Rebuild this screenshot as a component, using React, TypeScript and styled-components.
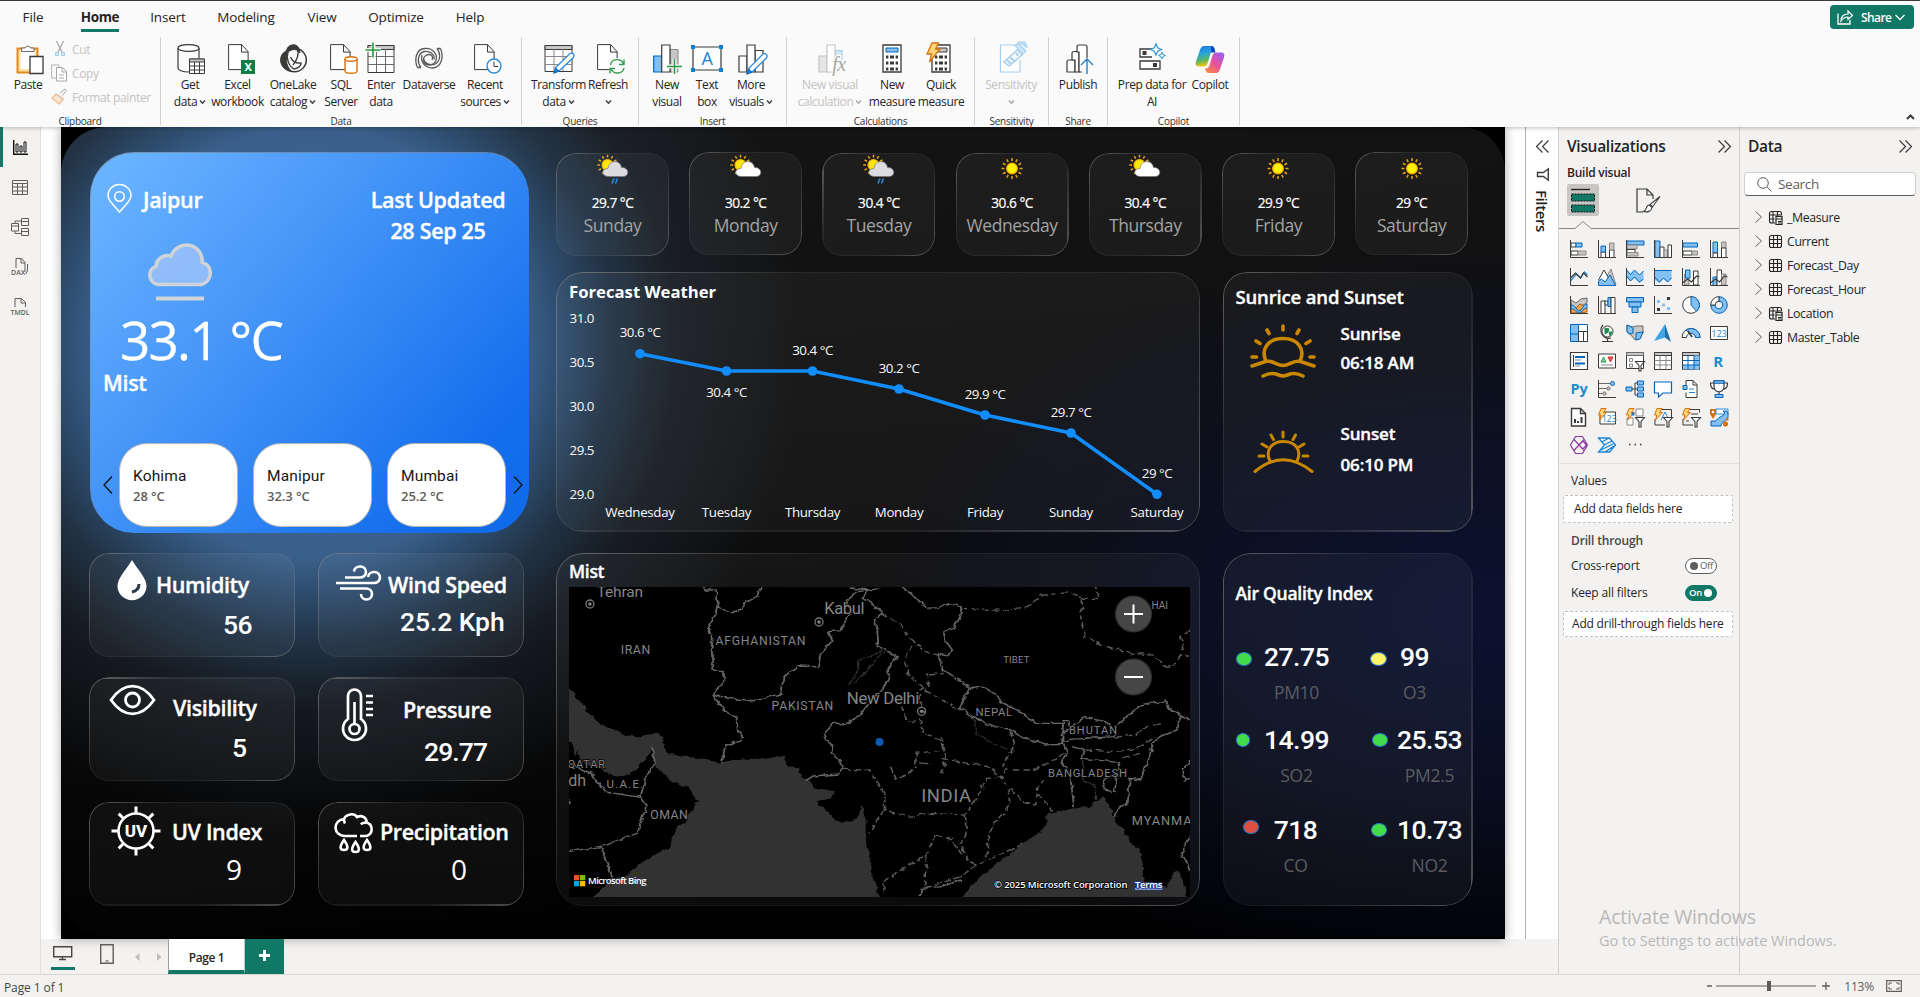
import React from 'react';
import styled, { createGlobalStyle, css } from 'styled-components';

const UI = '"Open Sans", "Noto Sans", sans-serif';
const DIN = 'Roboto, "Liberation Sans", sans-serif';
const K = '#3b3a39';
const B = '#84bff2';
const D = '#0364b8';
const G = '#c8c6c4';
const O = '#d8700d';
const GREEN = '#117865';

const Global = createGlobalStyle`
  *, *::before, *::after { box-sizing: border-box; }
  html, body { margin: 0; padding: 0; }
  body { font-family: ${UI}; font-stretch: 90%; color: #252423; background: #f3f2f1; overflow: hidden; }
  svg { display: block; flex: none; overflow: visible; }
`;

/* ---------- vector helpers ---------- */
type Shape = [d: string, stroke?: string, fill?: string, width?: number];
const r = (x: number, y: number, w: number, h: number) => `M${x} ${y}h${w}v${h}h${-w}z`;
const c = (x: number, y: number, q: number) => `M${x - q} ${y}a${q} ${q} 0 1 0 ${2 * q} 0a${q} ${q} 0 1 0 ${-2 * q} 0z`;

function Glyph({ w, h, box, shapes, children }: { w: number; h: number; box?: string; shapes?: Shape[]; children?: React.ReactNode }) {
  return (
    <svg width={w} height={h} viewBox={box ?? `0 0 ${w} ${h}`}>
      {shapes?.map(([d, stroke = K, fill = 'none', width = 1], i) => (
        <path key={i} d={d} stroke={stroke} fill={fill} strokeWidth={width} />
      ))}
      {children}
    </svg>
  );
}

/* ---------- shell ---------- */
const Shell = styled.div`
  width: 1920px; height: 997px; display: flex; flex-direction: column; position: relative;
  border-top: 1px solid #3b3a39; background: #f3f2f1; overflow: hidden;
`;
const Ribbon = styled.header`
  height: 126px; flex: none; background: #fafafa; position: relative; z-index: 2;
  box-shadow: 0 1px 4px rgba(0,0,0,.25); display: flex; flex-direction: column;
`;
const TabsRow = styled.nav`height: 36px; display: flex; padding-left: 13px;`;
const TabItem = styled.div<{ $w: number; $on?: boolean }>`
  width: ${p => p.$w}px; display: flex; justify-content: center; font-size: 13.5px; letter-spacing: -.15px;
  span { line-height: 20px; padding-top: 6px; height: 31px; white-space: nowrap;
    ${p => p.$on && css`font-weight: 700; letter-spacing: -.4px; border-bottom: 3px solid ${GREEN};`} }
`;
const ShareButton = styled.div`
  margin-left: auto; margin-right: 6px; margin-top: 4px; width: 84px; height: 24px; border-radius: 4px;
  background: ${GREEN}; color: #fff; font-size: 12px; display: flex; align-items: center; padding-left: 7px; gap: 8px;
  span { letter-spacing: -.6px; font-weight: 600; width: 29px; }
  svg:last-child { margin-left: -3px; }
`;
const Groups = styled.div`display: flex; height: 90px;`;
const Group = styled.section<{ $w: number; $pad?: number }>`
  width: ${p => p.$w}px; height: 88px; border-right: 1px solid #d2d0ce; display: flex; flex-direction: column;
  padding-left: ${p => p.$pad ?? 4}px;
`;
const GroupItems = styled.div`display: flex; height: 78px;`;
const GroupName = styled.div<{ $shift?: number }>`
  font-size: 10px; line-height: 12px; text-align: center; letter-spacing: -.25px; margin-left: -${p => p.$shift ?? 4}px; color: #323130;
  height: 10px;
`;
const Tool = styled.div<{ $w: number; $off?: boolean }>`
  width: ${p => p.$w}px; flex: none; display: flex; flex-direction: column; align-items: center; padding-top: 7px;
  font-size: 12px; line-height: 16px; letter-spacing: -.4px; color: ${p => (p.$off ? '#c4c2c0' : '#252423')};
`;
const ToolIcon = styled.div<{ $dx?: number }>`height: 30px; transform: translateX(${p => p.$dx ?? 0}px);`;
const ToolLabel = styled.div`
  margin-top: 3px; display: flex; flex-direction: column; align-items: center; white-space: nowrap;
  span { display: flex; align-items: center; gap: 2px; min-height: 16.500px; line-height: 16.500px; }
`;
const SmallTools = styled.div`display: flex; flex-direction: column; padding-top: 0; margin-left: 4px; width: 104px;`;
const SmallTool = styled.div`
  height: 24px; display: flex; align-items: center; gap: 5px; font-size: 12px; color: #c4c2c0; letter-spacing: -.35px; white-space: nowrap;
`;
const CollapseMark = styled.div`margin-left: auto; padding: 77px 5px 0 0;`;

function Caret({ color = K }: { color?: string }) {
  return <Glyph w={7} h={6} shapes={[['M1 1.500L3.500 4.200L6 1.500', color, 'none', 1.3]]} />;
}

const doc: Shape = ['M.6 .6h13l6.500 7v18h-19.500zM13.500 .6v7.500h6.500', K, '#fff'];
const toolIcons: Record<string, React.ReactNode> = {
  paste: <Glyph w={28} h={30} shapes={[
    ['M1.500 4.500h20v24h-20z', '#e08a1e', '#fce0a2', 2], ['M4.500 7h14v18h-14z', 'none', '#fff'],
    ['M5.500 7.500v-3.500h3.500a3 3 0 0 1 5.500 0h3.500v3.500z', '#6b6967', '#fff'], ['M14 12.500h13v17h-13z', K, '#fff', 1.3]]} />,
  get: <Glyph w={28} h={30} shapes={[
    ['M1 4v20c0 2 4 4 11 4M22 4v10', K, 'none', 1.2], ['M1 4c0-4.500 21-4.500 21 0s-21 4.500-21 0z', K, '#fff', 1.2],
    [r(12.5, 15, 15, 14.5), K, '#fff'], [r(12.5, 15, 15, 3), K, G], ['M17.500 18v11.500M22.500 18v11.500M12.500 22h15M12.500 26h15']]} />,
  excel: <Glyph w={28} h={30} shapes={[doc, [r(13, 16, 14, 14), 'none', '#107c41']]}>
    <text x="20" y="27" fontSize="11" fontWeight="700" fill="#fff" textAnchor="middle">X</text></Glyph>,
  lake: <Glyph w={28} h={30} shapes={[
    ['M14 .8c-5 0-7 3-7.500 6C2 9 0 13 .8 18c1 5 5 9 11 9.500-5-4-7-12-4-19C12 4 18 5 20 9c-.5-5-2.500-8-6-8.200z', K, K],
    [c(14.5, 16, 11.8), K, 'none', 1.5], ['M8 8c-2 6 .5 14 6 17 5-1 7-3 7-6-5 .5-9-2-10.500-6M13 21c4-5 6-11 4.500-16', K, 'none', 1.4]]} />,
  sql: <Glyph w={28} h={30} shapes={[doc, ['M15 15v12c0 3 12 3 12 0v-12', O, '#fff', 1.4], ['M15 15c0-3 12-3 12 0s-12 3-12 0z', O, '#fff', 1.4]]} />,
  enter: <Glyph w={28} h={30} shapes={[
    [r(1, 1.5, 26, 27), K, '#fff'], [r(1, 1.5, 26, 4), K, G], ['M1 12.500h26M1 20.500h26M9.500 5v23M18.500 5v23', '#6b6967'],
    ['M-1 6h15M6.500 -1.500v15', '#fafafa', 'none', 4], ['M-1.500 6h15M6 -1.500v15', '#239b44', 'none', 1.6]]} />,
  data: <Glyph w={28} h={30} shapes={[
    ['M2.500 23.500C-.5 17 0 5 10 4.500c8-.5 13 6 11 12-2 5-9 6-12 2-2-4 1-8 5-8 3 0 4.500 3 3 5.500', '#5a5856', 'none', 1.3],
    ['M25.500 4.500c3 7 2 19-8 19.500-7.500 0-12.500-6-10.500-13', '#5a5856', 'none', 1.3],
    ['M6 23.500C1.500 18 3 9 9 7.500c6-1 11 3 10 8', '#5a5856', 'none', 1.3],
    ['M22 4.500c4.500 6 3 14-3 16-6 1-10-2-10.500-6M2.500 23.500h3.500M22 4.500h3.500', '#5a5856', 'none', 1.3]]} />,
  recent: <Glyph w={28} h={30} shapes={[doc, [c(20, 22, 7), '#2b88d8', '#fff', 1.4], ['M20 17.500v5h4', K]]} />,
  transform: <Glyph w={30} h={30} shapes={[
    [r(1, 1.5, 27, 26), K, '#fff'], [r(1, 1.5, 27, 4), K, G], ['M1 12.500h27M1 20.500h27M10 5v22M19 5v22', '#8a8886'],
    ['M10 29l2-6L26 9.500c3-1 5 1 3.500 4L15 27z', '#2b88d8', '#fff', 1.3], ['M10 29l1.500-5 3.500 3z', D, '#2b88d8']]} />,
  refresh: <Glyph w={28} h={30} shapes={[doc, [r(12, 14, 16, 16), 'none', '#fafafa'],
    ['M13.500 21c1-7 11-7 13-1M27 15.500v5h-5M27 24c-1 6-10 7-13 1M13 29.500v-5h5', '#2f9e4f', 'none', 1.4]]} />,
  visual: <Glyph w={28} h={30} shapes={[
    [r(0.7, 12, 8, 16), D, B, 1.2], [r(17, 5.5, 8, 22.5), '#8a8886', G], [r(8.7, 1, 8.3, 27), K, '#fff', 1.2],
    ['M14 22.500h15M21.500 15v15', '#fafafa', 'none', 4], ['M14 22.500h15M21.500 15v15', '#239b44', 'none', 1.5]]} />,
  text: <Glyph w={32} h={30} shapes={[[r(2, 3, 28, 23), K, '#fff', 1.2], [r(0, 1, 4, 4), 'none', '#0f7fd0'], [r(28, 1, 4, 4), 'none', '#0f7fd0'], [r(0, 24, 4, 4), 'none', '#0f7fd0'], [r(28, 24, 4, 4), 'none', '#0f7fd0']]}>
    <text x="16" y="21" fontSize="18" fill="#1784d0" textAnchor="middle">A</text></Glyph>,
  more: <Glyph w={30} h={30} shapes={[
    [r(1, 12, 8, 16), K, '#fff', 1.2], [r(17, 6.5, 8, 21.5), K, '#fff', 1.2], [r(9, 1, 8, 27), K, '#fff', 1.2],
    ['M9 30l2-6L25 10c3-1 5 1 3.500 4L14 28z', '#2b88d8', '#fff', 1.3], ['M9 30l1.500-5 3.500 3z', D, '#2b88d8']]} />,
  fx: <Glyph w={28} h={30} shapes={[
    [r(1, 12, 8, 16), '#c8c6c4', '#e6e5e3', 1.2], [r(17, 6.5, 7, 12), '#a9cdea', '#d3e6f6', 1.2], [r(9, 1, 8, 27), '#c8c6c4', '#fff', 1.2]]}>
    <text x="21" y="27" fontFamily="Liberation Serif" fontStyle="italic" fontSize="20" fill="#a8a6a4" stroke="#fafafa" strokeWidth="3" paintOrder="stroke" textAnchor="middle">fx</text></Glyph>,
  calc: <Glyph w={20} h={30} shapes={[
    [r(1, 1, 18, 27), K, '#fff', 1.3], [r(4, 4, 12, 4), D, B, 1], ['M4 13h12M4 19h12M4 25h12', K, 'none', 3]]}>
    <path d="M7.200 11v16M12.800 11v16" stroke="#fff" strokeWidth="1.600" /></Glyph>,
  quick: <Glyph w={26} h={30} shapes={[
    [r(6, 1, 18, 27), K, '#fff', 1.3], [r(11, 4, 10, 4), K, G], ['M9 13h12M9 19h12M9 25h12', K, 'none', 3], ['M12.200 11v16M17.800 11v16', '#fff', 'none', 1.6],
    ['M6-1h6.500l-3 6h4.500L3.500 18l2-8H1z', O, '#fcd679', 1.3]]} />,
  sens: <Glyph w={28} h={30} shapes={[
    ['M21 16v12h-19.500v-27h16', '#a6d0ee', '#fff', 1.2], ['M5 18l13-12 5 5-13 11z', '#a6d0ee', '#fafafa', 1.6], ['M8 16l4 4M11 13l4 4M17 9l2 3', '#a6d0ee', 'none', 2],
    ['M16 2l3-3 8 8-3 3zM20-2l6 0 2 5z', '#a6d0ee', '#cde6f7', 1.2]]} />,
  publish: <Glyph w={28} h={30} shapes={[
    ['M1 28v-10q0-2 2-2h6v12z', K, '#fff', 1.2], ['M6 16v-7q0-1.500 2-1.500h5v20.500h-4v-12z', K, '#fff', 1.2], ['M11 8v-5q0-2 2-2h6q2 0 2 2v25h-8v-20z', K, '#fff', 1.2],
    [r(16, 14, 12, 16), 'none', '#fafafa'], ['M21 30v-15M15 21l6-6 6 6', '#1f7fc9', 'none', 1.4]]} />,
  prep: <Glyph w={26} h={30} shapes={[
    [r(1, 5, 20, 8), K, '#fff', 1.3], [r(3.5, 7, 4, 4), 'none', K], [r(1, 17, 20, 8), K, '#fff', 1.3], [r(14, 19, 4, 4), 'none', K], [r(13, 0, 14, 15.5), 'none', '#fafafa'],
    ['M17 0l1.700 3.800 3.800 1.700-3.800 1.700-1.700 3.800-1.700-3.800-3.800-1.700 3.800-1.700z', '#2b96d8', '#fff', 1.2], ['M23 8l1 2.500 2.500 1-2.500 1-1 2.500-1-2.500-2.500-1 2.500-1z', '#2b96d8', '#fff']]} />,
  copilot: (
    <svg width="30" height="30" viewBox="0 -1.500 30 30">
      <defs>
        <linearGradient id="cpA" x1="0" y1="0" x2="0.2" y2="1"><stop offset="0" stopColor="#1672e8" /><stop offset=".45" stopColor="#2aa6d8" /><stop offset=".75" stopColor="#5cb85a" /><stop offset="1" stopColor="#f2c40f" /></linearGradient>
        <linearGradient id="cpB" x1=".8" y1="0" x2="0.1" y2="1"><stop offset="0" stopColor="#a45cf0" /><stop offset=".5" stopColor="#e8509a" /><stop offset="1" stopColor="#f98b3c" /></linearGradient>
      </defs>
      <path d="M20 5l-.8-2.500Q18.500.5 16 .5H9Q6.500.5 5.500 3L1 16q-1.500 5 3 5h5q2.500 0 3.500-3l3-10q.8-3 4.500-3z" fill="url(#cpA)" />
      <path d="M10 23l.8 2.500Q11.500 27.500 14 27.500h7q2.500 0 3.500-2.500L29 12q1.500-5-3-5h-5q-2.500 0-3.500 3l-3 10q-.8 3-4.500 3z" fill="url(#cpB)" />
      <path d="M16 .5Q18.500.5 19.200 2.500L20.500 7h-5l.8-2z" fill="#0a45c0" />
    </svg>
  ),
};

type ToolDef = { icon: string; w: number; lines: string[]; caret?: boolean; off?: boolean; dx?: number };
type GroupDef = { name: string; w: number; pad: number; tools: ToolDef[] };
const groups: GroupDef[] = [
  { name: 'Data', w: 361, pad: 4, tools: [
    { icon: 'get', w: 50, lines: ['Get', 'data'], caret: true, dx: 1 }, { icon: 'excel', w: 45, lines: ['Excel', 'workbook'], dx: 4 },
    { icon: 'lake', w: 66, lines: ['OneLake', 'catalog'], caret: true, dx: 1 }, { icon: 'sql', w: 30, lines: ['SQL', 'Server'], dx: 3 },
    { icon: 'enter', w: 50, lines: ['Enter', 'data'] }, { icon: 'data', w: 46, lines: ['Dataverse'] },
    { icon: 'recent', w: 66, lines: ['Recent', 'sources'], caret: true, dx: 3 }] },
  { name: 'Queries', w: 117, pad: 2, tools: [
    { icon: 'transform', w: 69, lines: ['Transform', 'data'], caret: true }, { icon: 'refresh', w: 30, lines: ['Refresh', ''], caret: true, dx: 3 }] },
  { name: 'Insert', w: 148, pad: 2, tools: [
    { icon: 'visual', w: 52, lines: ['New', 'visual'] }, { icon: 'text', w: 28, lines: ['Text', 'box'] }, { icon: 'more', w: 60, lines: ['More', 'visuals'], caret: true, dx: 2 }] },
  { name: 'Calculations', w: 188, pad: 5, tools: [
    { icon: 'fx', w: 76, lines: ['New visual', 'calculation'], caret: true, off: true, dx: 2 }, { icon: 'calc', w: 48, lines: ['New', 'measure'] }, { icon: 'quick', w: 50, lines: ['Quick', 'measure'], dx: -2 }] },
  { name: 'Sensitivity', w: 74, pad: 2, tools: [{ icon: 'sens', w: 68, lines: ['Sensitivity', ''], caret: true, off: true, dx: 2 }] },
  { name: 'Share', w: 59, pad: 2, tools: [{ icon: 'publish', w: 54, lines: ['Publish'], dx: 2 }] },
  { name: 'Copilot', w: 132, pad: 2, tools: [{ icon: 'prep', w: 84, lines: ['Prep data for', 'AI'] }, { icon: 'copilot', w: 32, lines: ['Copilot'] }] },
];

function ToolButton({ t }: { t: ToolDef }) {
  return (
    <Tool $w={t.w} $off={t.off}>
      <ToolIcon $dx={t.dx}>{toolIcons[t.icon]}</ToolIcon>
      <ToolLabel>
        {t.lines.map((l, i) => (
          <span key={i}>{l}{t.caret && i === t.lines.length - 1 && <Caret color={t.off ? '#a8a6a4' : K} />}</span>
        ))}
      </ToolLabel>
    </Tool>
  );
}

function RibbonBar() {
  return (
    <Ribbon>
      <TabsRow>
        <TabItem $w={40}><span>File</span></TabItem>
        <TabItem $w={94} $on><span>Home</span></TabItem>
        <TabItem $w={42}><span>Insert</span></TabItem>
        <TabItem $w={114}><span>Modeling</span></TabItem>
        <TabItem $w={38}><span>View</span></TabItem>
        <TabItem $w={110}><span>Optimize</span></TabItem>
        <TabItem $w={38}><span>Help</span></TabItem>
        <ShareButton>
          <Glyph w={16} h={15} shapes={[['M1 3.500v10.500h12v-4', '#fff', 'none', 1.3], ['M4 11c0-4 2-7 7-7V1l4.500 4.500L11 9.500V7C8 7 6 8 4 11z', '#fff', 'none', 1.2]]} />
          <span>Share</span>
          <Glyph w={10} h={7} shapes={[['M.5 1l4.500 4.500L9.500 1', '#fff', 'none', 1.3]]} />
        </ShareButton>
      </TabsRow>
      <Groups>
        <Group $w={161} $pad={13}>
          <GroupItems>
            <Tool $w={30}><ToolIcon $dx={2}>{toolIcons.paste}</ToolIcon><ToolLabel><span>Paste</span></ToolLabel></Tool>
            <SmallTools>
              <SmallTool><Glyph w={20} h={18} box="-8 0 20 18" shapes={[['M1.500 1l6 12M8.500 1l-6 12', '#a8a6a4', 'none', 1.2], [r(0.5, 12.5, 3, 3), '#9fcdea', '#d5eaf7'], [r(6.5, 12.5, 3, 3), '#9fcdea', '#d5eaf7']]} />Cut</SmallTool>
              <SmallTool><Glyph w={20} h={18} box="-4 0 20 18" shapes={[['M8 3.500V1H.6v13h5', '#b5b3b1'], ['M5.500 3.500h6l4 4v9.500h-10zM11 3.500v4.500h4.500M8 11h5M8 14h5', '#a8a6a4', '#fff']]} />Copy</SmallTool>
              <SmallTool><Glyph w={20} h={18} box="-4 0 20 18" shapes={[['M9 5l5-4 1.500 1.500-4 5', '#a8a6a4'], ['M5 7l7 5', '#a8a6a4', 'none', 3], ['M5 6l-4 4 7 6 4-5z', '#f2bd94', '#fbe6d3', 1.3]]} />Format painter</SmallTool>
            </SmallTools>
          </GroupItems>
          <GroupName $shift={13}>Clipboard</GroupName>
        </Group>
        {groups.map(g => (
          <Group key={g.name} $w={g.w} $pad={g.pad}>
            <GroupItems>{g.tools.map((t, i) => <ToolButton key={i} t={t} />)}</GroupItems>
            <GroupName $shift={g.pad}>{g.name}</GroupName>
          </Group>
        ))}
        <CollapseMark><Glyph w={9} h={6} shapes={[['M1 5l3.500-3.500L8 5', K, 'none', 2]]} /></CollapseMark>
      </Groups>
    </Ribbon>
  );
}

/* ---------- body ---------- */
const Body = styled.div`display: flex; height: 847px; flex: none;`;
const Rail = styled.aside`width: 41px; flex: none; border-right: 1px solid #e1dfdd; display: flex; flex-direction: column;`;
const RailItem = styled.div<{ $on?: boolean }>`
  height: 40px; display: flex; align-items: center; justify-content: center; padding-right: ${p => (p.$on ? 3 : 0)}px;
  border-left: ${p => (p.$on ? `3px solid ${GREEN}` : '0')};
`;
const Center = styled.main`width: 1517px; flex: none; display: flex; flex-direction: column;`;
const Stage = styled.div`height: 812px; background: #fff; display: flex; padding-left: 20px;`;
const FiltersPane = styled.aside`
  margin-left: 20px; flex: 1; border-left: 1px solid #b3b0ad; display: flex; flex-direction: column; align-items: center; padding-top: 13px; gap: 15px;
  span { writing-mode: vertical-rl; font-size: 15px; font-weight: 600; letter-spacing: -.4px; line-height: 16px; margin-top: -6px; }
`;

const Canvas = styled.div`
  width: 1444px; height: 812px; background: #000; flex: none; box-shadow: 0 0 10px rgba(0,0,0,.35);
`;
const Backdrop = styled.div`
  width: 100%; height: 810px; border-radius: 46px 44px 0 46px; display: flex; gap: 27px; padding: 25px 0 0 29px;
  background:
    radial-gradient(circle 500px at 250px 216px, rgba(64,104,154,1) 0, rgba(58,95,138,1) 43%, rgba(48,82,118,.92) 50%, rgba(42,66,92,.7) 60%, rgba(36,48,62,.42) 73%, rgba(22,28,34,0) 98%),
    radial-gradient(ellipse 620px 380px at 1420px 490px, #0b1230 0, rgba(11,17,42,.8) 40%, rgba(8,10,24,0) 100%),
    linear-gradient(175deg, #151515 0, #0e0e0e 45%, #020202 88%, #000 100%);
`;
const edge = css`
  position: relative;
  &::before {
    content: ''; position: absolute; inset: 0; border-radius: inherit; padding: 1.3px; pointer-events: none;
    background: linear-gradient(125deg, rgba(150,145,140,.6) 0, rgba(140,135,130,.12) 30%, rgba(130,130,130,.12) 65%, rgba(150,150,145,.5) 100%);
    mask: linear-gradient(#000 0 0) content-box exclude, linear-gradient(#000 0 0);
  }
`;
const semibold = css`font-weight: 600; -webkit-text-stroke: .35px currentColor;`;
const LeftColumn = styled.div`width: 439px; flex: none; display: flex; flex-direction: column; gap: 20px;`;
const RightColumn = styled.div`width: 918px; flex: none; display: flex; flex-direction: column;`;

const Hero = styled.section`
  height: 381px; border-radius: 44px; color: #fff; padding-top: 32px; border: 1px solid; border-color: rgba(125,130,135,.6) transparent transparent rgba(125,130,135,.4);
  background: linear-gradient(131deg, #6cb6ff 0, #66b0ff 8%, #4a99f9 35%, #2f84f3 60%, #146eed 84%, #0f6aea 100%) border-box;
`;
const HeroTop = styled.div`display: flex; padding-left: 16px; height: 61px; margin-top: -1px;`;
const Heading = styled.div`
  ${semibold} font-size: 21.5px; line-height: 31px; white-space: nowrap; letter-spacing: -.3px;
`;
const Place = styled.div`display: flex; gap: 11px; width: 264px;`;
const Updated = styled.div`width: 134px; display: flex; flex-direction: column; align-items: center;`;
const HeroIcon = styled.div`margin: -3px 0 0 57px; height: 58px;`;
const BigTemp = styled.div`margin: 10px 0 0 29px; font-size: 53px; line-height: 60px; letter-spacing: -1.8px; white-space: nowrap; -webkit-text-stroke: .3px #fff;`;
const Condition = styled(Heading)`margin: -2px 0 0 12px; line-height: 30px;`;
const Cities = styled.div`display: flex; align-items: center; gap: 15px; margin: 45px 0 0 11.500px; height: 84px;
  svg:first-child { margin-right: -8.500px; } svg:last-child { margin-left: -8px; }`;
const City = styled.div`
  width: 119px; height: 84px; border-radius: 28px; background: #fff; border: 1.5px solid #b9b5b0; padding: 21.500px 0 0 13px; color: #161616;
`;
const CityName = styled.div`font-family: ${DIN}; font-size: 15.5px; line-height: 20px; letter-spacing: .15px;`;
const CityTemp = styled.div`font-size: 13px; font-weight: 600; line-height: 18px; margin-top: 1.500px; color: #605e5c; letter-spacing: -.05px;`;

const Metrics = styled.div`display: grid; grid-template-columns: 206px 206px; gap: 20.300px 23px; grid-auto-rows: 104px; margin-left: -1px;`;
const Glass = styled.section<{ $r?: number }>`
  ${edge} border-radius: ${p => p.$r ?? 20}px; background: rgba(255,255,255,.045); color: #fff;
`;
const MetricCard = styled(Glass)`display: flex; align-items: flex-start;`;
const MetricIcon = styled.div<{ $x: number; $y: number }>`width: 64px; flex: none; padding: ${p => p.$y}px 0 0 ${p => p.$x}px;`;
const MetricTitle = styled.div<{ $x: number; $y: number }>`
  ${semibold} font-size: 21.5px; line-height: 28px; white-space: nowrap; letter-spacing: -.35px;
  margin: ${p => p.$y}px 0 0 ${p => p.$x}px;
`;
const MetricValue = styled.div<{ $x: number; $gap: number; $light?: boolean; $ls?: number }>`
  font-family: ${p => (p.$light ? UI : DIN)}; font-weight: ${p => (p.$light ? 400 : 500)}; font-size: ${p => (p.$light ? 28 : 26.5)}px;
  line-height: 32px; margin: ${p => p.$gap}px 0 0 ${p => p.$x}px; white-space: nowrap; letter-spacing: ${p => p.$ls ?? -.45}px;
`;

const Days = styled.div`display: flex; gap: 20.200px; padding-top: 1px; width: 912px;`;
const Day = styled(Glass)<{ $up?: boolean }>`
  width: 113px; flex: none; height: 103px; margin-top: ${p => (p.$up ? -1 : 0)}px; display: flex; flex-direction: column; align-items: center;
`;
const DayIcon = styled.div<{ $up?: boolean }>`height: 33px; margin-top: ${p => (p.$up ? 1 : 0)}px;`;
const DayTemp = styled.div`margin-top: 7px; font-size: 13.7px; line-height: 20px; letter-spacing: -.5px; -webkit-text-stroke: .2px #fff;`;
const DayName = styled.div`font-size: 17.500px; line-height: 24px; color: #a3a3a3; letter-spacing: -.4px;`;
const Panels = styled.div`display: grid; grid-template-columns: 644px 250px; grid-template-rows: 259.500px 353px; gap: 21.500px 22.500px; margin-top: 16px;`;
const ChartCard = styled(Glass)`padding-top: 8px;`;
const ChartTitle = styled.div`font-size: 16.700px; font-weight: 700; line-height: 24px; height: 23px; padding-left: 13px; letter-spacing: 0;`;
const SideTitle = styled.div<{ $top: number; $size: number; $ls: number }>`
  ${semibold} padding: ${p => p.$top}px 0 0 13px; font-size: ${p => p.$size}px; letter-spacing: ${p => p.$ls}px; line-height: 26px; white-space: nowrap;
`;
const SunRow = styled.div<{ $mt: number; $pad: number; $lh: number }>`
  ${semibold} margin-top: ${p => p.$mt}px; display: flex; height: ${p => p.$lh * 2}px; line-height: ${p => p.$lh}px; font-size: 17px; letter-spacing: -.15px;
  > svg { margin: ${p => p.$pad}px 0 0 27px; }
`;
const SunText = styled.div`margin-left: 25px; white-space: nowrap;`;
const MapCard = styled(Glass)`padding: 5px 0 0 13px;`;
const MapTitle = styled.div`${semibold} font-size: 17.500px; line-height: 26px; letter-spacing: -.3px; margin-bottom: 3px;`;
const MapFrame = styled.div`width: 621px; height: 310px; background: #000; overflow: hidden; position: relative;`;
const MapLayer = styled.div`position: absolute; inset: 0;`;
const AirGrid = styled.div`display: grid; grid-template-columns: 134px 1fr; grid-template-rows: 83px 90px 70px; padding: 35px 0 0 13px;`;
const AirCell = styled.div`display: flex;`;
const AirDot = styled.div<{ $x: number; $y: number; $rx: number; $c: string }>`
  width: 26px; flex: none; padding: ${p => p.$y - 7}px 0 0 ${p => p.$x}px;
  &::after { content: ''; display: block; width: ${p => p.$rx * 2}px; height: 14px; border-radius: 50%; background: ${p => p.$c}; border: 1px solid #2a78c4; }
`;
const AirText = styled.div<{ $w: number }>`width: ${p => p.$w}px; display: flex; flex-direction: column; align-items: center; gap: 5.500px;`;
const AirValue = styled.div`font-family: ${DIN}; font-weight: 500; font-size: 26.500px; line-height: 32px; letter-spacing: -.55px;`;
const AirName = styled.div`font-size: 17.500px; line-height: 26px; color: #5c5c60; letter-spacing: -.3px;`;

/* weather glyphs */
const rays = (n: number, cx: number, cy: number, a: number, b: number) =>
  Array.from({ length: n }, (_, i) => {
    const t = (i / n) * Math.PI * 2;
    return `M${cx + a * Math.cos(t)} ${cy + a * Math.sin(t)}L${cx + b * Math.cos(t)} ${cy + b * Math.sin(t)}`;
  }).join('');

function DayGlyph({ kind }: { kind: 'sun' | 'cloud' | 'rain' }) {
  if (kind === 'sun')
    return <Glyph w={32} h={33} shapes={[[c(16, 15.5, 5.3), '#f6b100', '#fff200', 1.2], [rays(12, 16, 15.5, 7.5, 10.5), '#e6a212', 'none', 1.5]]} />;
  return (
    <Glyph w={32} h={33} shapes={[
      [c(10.5, 12, 5.5), '#f6b100', '#ffe60a', 1.2], [rays(12, 10.5, 12, 7.5, 10.3), '#e6a212', 'none', 1.5],
      ['M11 23.500c-7-.5-7-8 0-8 1-9 12-9 13.500-1 8 0 8 8.500 2 9z', '#77777a', kind === 'rain' ? '#dcdce0' : '#fff', 0.7],
      ...(kind === 'rain' ? [['M17 25.500l-2 5M20.500 25.500l-2 5', '#2b86e0', 'none', 1.6] as Shape] : [])]} />
  );
}

const days: [string, string, 'sun' | 'cloud' | 'rain', boolean?][] = [
  ['29.7 °C', 'Sunday', 'rain'], ['30.2 °C', 'Monday', 'cloud', true], ['30.4 °C', 'Tuesday', 'rain'], ['30.6 °C', 'Wednesday', 'sun'],
  ['30.4 °C', 'Thursday', 'cloud'], ['29.9 °C', 'Friday', 'sun'], ['29 °C', 'Saturday', 'sun', true],
];

const W = '#fff';
const metrics = [
  { t: 'Humidity', v: '56', ix: 28, iy: 7, tx: 3, ty: 18, vx: 70, gap: 10,
    icon: <Glyph w={30} h={40} shapes={[['M15 0C9 10 .5 18 .5 26a14.300 14 0 0 0 29 0C29.500 18 21 10 15 0z', 'none', W], ['M22 24c0 4-2 7-7 8', '#2b3a4c', 'none', 3]]} /> },
  { t: 'Wind Speed', v: '25.2 Kph', ix: 18, iy: 12, tx: 6, ty: 18, vx: 18, gap: 7, ls: -.1,
    icon: <Glyph w={45} h={36} shapes={[['M9 12.500h15a6 5.500 0 1 0-6-6M0 18h38a6 5.500 0 1 0-6-6M4 23.500h27a5.500 5.500 0 1 1-6 5.500', W, 'none', 2.6]]} /> },
  { t: 'Visibility', v: '5', ix: 21, iy: 8, tx: 20, ty: 17, vx: 79, gap: 10,
    icon: <Glyph w={45} h={30} shapes={[['M1 15C8 5 15 1.200 22.500 1.200S37 5 44 15C37 25 30 28.800 22.500 28.800S8 25 1 15z', W, 'none', 2.8], [c(22.5, 15, 7), W, 'none', 2.8]]} /> },
  { t: 'Pressure', v: '29.77', ix: 24, iy: 11, tx: 21, ty: 19, vx: 42, gap: 12, ls: -.9,
    icon: <Glyph w={32} h={54} shapes={[['M6 31V8a6.500 6.500 0 0 1 13 0v23a11.500 11.500 0 1 1-13 0z', W, 'none', 2.7], [c(12.5, 41, 5), W, 'none', 2.7], ['M12.500 36V14', W, 'none', 2.7], ['M24 8h7M24 14.500h7M24 21h7M24 27h7', W, 'none', 2.7]]} /> },
  { t: 'UV Index', v: '9', ix: 22, iy: 4, tx: 19, ty: 16, vx: 73, gap: 7, light: true,
    icon: <Glyph w={50} h={50} shapes={[[c(25, 25, 17.5), W, 'none', 2.6], [rays(8, 25, 25, 18, 24.5), W, 'none', 3]]}>
      <text x="25" y="31" fontSize="17" fontWeight="800" fill="#fff" textAnchor="middle" fontFamily="Roboto">UV</text></Glyph> },
  { t: 'Precipitation', v: '0', ix: 17, iy: 11, tx: -2, ty: 16, vx: 69, gap: 7, light: true,
    icon: <Glyph w={40} h={40} shapes={[['M22 23H10a9 8.500 0 0 1-1-17c2-5 10-6.500 13-2 5-2.500 10 1 9.500 5.500a7 7 0 0 1 0 13.500H25M9 6c0 2 0 3 1 4.500M31 10c-2-.5-4 0-5 1.500', W, 'none', 2.6],
      ['M9 27c-5 7-4 10 0 10s5-3 0-10zM20.500 29c-5 7-4 10 0 10s5-3 0-10zM32 27c-5 7-4 10 0 10s5-3 0-10z', W, 'none', 2.6]]} /> },
];

/* line chart */
const pts: [number, number, string, string, number][] = [
  [84, 50.7, '30.6 °C', 'Wednesday', 29], [170.5, 68, '30.4 °C', 'Tuesday', 89], [256.5, 68, '30.4 °C', 'Thursday', 47],
  [343, 86, '30.2 °C', 'Monday', 65], [429, 112, '29.9 °C', 'Friday', 91], [515, 130, '29.7 °C', 'Sunday', 109], [601, 191.3, '29 °C', 'Saturday', 170],
];
function LineChart() {
  return (
    <svg width="644" height="228" fontSize="13.300" fill="#fafafa" letterSpacing="-.45">
      {['31.0', '30.5', '30.0', '29.5', '29.0'].map((t, i) => <text key={t} x="13.500" y={19.5 + i * 44}>{t}</text>)}
      <polyline points={pts.map(p => `${p[0]},${p[1]}`).join(' ')} fill="none" stroke="#118dff" strokeWidth="3.500" />
      {pts.map(([x, y, v, d, ly]) => (
        <g key={d} textAnchor="middle">
          <circle cx={x} cy={y} r="4.800" fill="#118dff" />
          <text x={x} y={ly + 4.5}>{v}</text>
          <text x={x} y="214" letterSpacing="-.3">{d}</text>
        </g>
      ))}
    </svg>
  );
}

/* map */
const sea = [
  'M60,440L68,445 85,460 88,480 100,490 115,525 140,553 175,572 210,590 235,592 262,582 280,582 288,600 296,638 335,650 380,655 420,668 460,660 520,655 572,648 580,680 605,685 612,712 630,722 640,742 690,755 682,775 648,783 670,815 705,852 745,835 752,792 762,840 762,880 772,960 780,1020 798,1080 118,1080 140,1055 165,1015 200,1005 235,970 275,940 308,920 315,865 340,845 352,815 370,782 345,742 310,725 285,700 268,672 262,625 255,645 235,675 210,705 170,712 150,690 125,680 100,668 90,640 92,625 82,650 76,605 60,595z',
  'M980,1080L1010,1035 1080,960 1130,912 1178,868 1190,822 1250,805 1290,800 1315,765 1330,790 1350,850 1368,870 1378,900 1400,925 1412,975 1414,1025 1440,1030 1465,1040 1490,988 1508,1030 1512,1080z',
];
const solid = [
  'M385,141L390,150 412,150 416,190 410,225 395,262 402,300 403,390 430,392 432,420 405,462 430,510 460,535 463,575 475,590 470,602 435,615 430,640 426,668',
  'M415,200L450,218 475,205 480,188 510,170 518,141',
  'M405,462L440,475 500,482 565,462 570,410 605,378 650,380 658,340 685,305 675,275 705,272 715,240 728,215 718,190 718,180 740,155 798,145',
  'M725,144L768,150 755,175 780,195 800,218 785,240 790,320 838,350 815,385 815,425 795,455 780,475 745,530 705,555 690,545 663,580 668,600 685,610 682,640 702,660 710,688 700,702 640,708 622,722',
  'M845,141L870,160 885,180 905,205 930,203 955,190 985,200 985,225 970,265 948,275 948,300 965,330 955,345 932,340 942,390',
  'M942,390L970,408 1005,445 992,480 982,505 1040,550 1100,572 1130,592 1180,612 1222,610 1224,550 1160,550 1128,520 1080,488 1070,465 1030,438 1005,445',
  'M1224,580L1245,560 1275,533 1325,545 1345,575 1345,590 1240,598 1222,605M1345,562L1375,530 1400,500 1430,490 1465,483 1472,505 1500,525 1490,570 1450,590 1435,610 1425,655 1405,720 1380,715 1375,795 1355,800 1345,830',
  'M1222,545L1240,545 1240,560M1472,505L1521,540M1225,610L1232,640 1220,665 1240,700 1250,800M1245,620L1275,630 1270,655 1355,668 1350,700 1320,720 1318,750 1345,755 1350,700',
  'M68,670L120,700 150,755 235,772 248,800 228,880 140,920 170,1012M68,935L140,920M265,668L265,682 248,710 235,772M262,620L270,672',
  'M68,775L72,795M1521,660L1505,690 1508,720 1521,715M1521,890L1502,940 1521,990M890,1071L892,1045 940,1040 985,1020',
];
const dashed = [
  'M985,205L1050,208 1085,212 1140,200 1175,165 1240,158 1275,175 1310,175 1300,141',
  'M1270,175L1265,230 1275,290 1320,318 1390,340 1435,345 1460,378 1485,378 1500,345 1521,345M1521,270L1500,290 1505,330',
  'M800,220L840,250 870,300 905,335 940,350M870,318L855,350 860,400 885,430 905,455 940,480 985,510M910,405L945,400M905,400L910,440 890,450 890,500 900,520',
  'M845,500L860,545 890,540 895,580 935,600 945,630 880,640 880,670 915,675M940,590L950,650 940,700M940,655L1000,670 1050,680 1080,715 1090,690 1150,690 1190,670 1225,640',
  'M710,688L770,690 790,730 810,770 805,810 865,832 905,820 995,825 1020,780 1045,715 1085,712M820,680L835,720 860,705 880,680',
  'M805,810L785,850 770,880M995,825L1000,870 985,915 1000,960 1020,975 1085,940 1130,912M1045,950L1050,880 1065,850 1100,790 1095,750 1080,715M1100,745L1130,785 1160,795 1165,740 1180,720',
  'M925,885L965,900 985,940 1005,960M925,885L905,945 850,985 805,1025 805,1060M905,945L900,1045 985,1010 1020,975',
  'M1100,575L1110,610 1085,680M1345,592L1390,585 1420,560 1455,550M1275,630L1350,635 1395,625 1440,590M1405,640L1360,655M1165,760L1200,815',
];
const rivers = ['M805,325L775,350 750,355 740,400 725,435M805,335L770,385 735,430M1015,530L1020,580 1060,610 1110,635M1270,655L1270,720 1300,740 1300,780'];
const mapLabels: [number, number, string, number, number][] = [
  [133, 171, 'Tehran', 15.5, -0.2], [665, 222, 'Kabul', 16.5, -0.3], [718, 493, 'New Delhi', 16.8, -0.3], [189, 342, 'IRAN', 12.3, 0.6], [411, 315, 'AFGHANISTAN', 12.2, 0.75],
  [542, 511, 'PAKISTAN', 12.2, 0.75], [1084, 368, 'TIBET', 9.5, 0.2], [1019, 528, 'NEPAL', 11.3, 0.6], [1238, 582, 'BHUTAN', 11, 1], [1189, 711, 'BANGLADESH', 11.2, 0.8],
  [892, 787, 'INDIA', 18.5, 0.6], [1385, 856, 'MYANMAR', 12.8, 0.9], [258, 836, 'OMAN', 12.3, 0.5], [156, 744, 'U.A.E.', 11.5, 1.2], [65, 683, 'QATAR', 11, 0.8], [66, 738, 'dh', 16, 0], [1431, 206, 'HAI', 10, 0],
];
const mx = (x: number) => (x - 68) / 2.34;
const my = (y: number) => (y - 141) / 3;
function MapDrawing() {
  return (
    <MapFrame>
      <MapLayer>
        <svg width="621" height="310" viewBox="68 141 1453 930" preserveAspectRatio="none" fill="none">
          <filter id="rough" x="0" y="0" width="1" height="1">
            <feTurbulence type="fractalNoise" baseFrequency=".05" numOctaves="3" seed="4" />
            <feDisplacementMap in="SourceGraphic" scale="14" xChannelSelector="R" yChannelSelector="G" />
          </filter>
          <g filter="url(#rough)">
            {sea.map(d => <path key={d} d={d} fill="#333" />)}
            {rivers.map(d => <path key={d} d={d} stroke="#343434" strokeWidth="3" />)}
            {solid.map(d => <path key={d} d={d} stroke="#666" strokeWidth="4.200" />)}
            {dashed.map(d => <path key={d} d={d} stroke="#5c5c5c" strokeWidth="3.800" strokeDasharray="17 8" />)}
          </g>
        </svg>
      </MapLayer>
      <MapLayer>
        <svg width="621" height="310" fontFamily="Roboto" fill="#868686">
          {mapLabels.map(([x, y, t, s, ls]) => (
            <text key={t} x={mx(x)} y={my(y)} fontSize={s} letterSpacing={ls} stroke="#000" strokeWidth="1.500" paintOrder="stroke">{t}</text>
          ))}
          {[[117, 192], [653, 246], [893, 514]].map(([x, y]) => (
            <g key={x}><circle cx={mx(x)} cy={my(y)} r="4" fill="none" stroke="#777" strokeWidth="1.300" /><circle cx={mx(x)} cy={my(y)} r="1.700" /></g>
          ))}
          <circle cx="310.500" cy="155" r="4" fill="#0a5bb0" />
          <g fill="#464646" stroke="#2c2c2c" strokeWidth="1.200">
            <circle cx="564.500" cy="27" r="18" /><circle cx="564.500" cy="90" r="18" />
            <path d="M555 27h19M564.500 17.500v19M555 90h19" stroke="#fff" strokeWidth="2" />
          </g>
          <rect x="5" y="288" width="5.300" height="5.300" fill="#f25022" /><rect x="11" y="288" width="5.300" height="5.300" fill="#7fba00" />
          <rect x="5" y="294" width="5.300" height="5.300" fill="#00a4ef" /><rect x="11" y="294" width="5.300" height="5.300" fill="#ffb900" />
          <g fontFamily="Open Sans" fill="#fff">
            <text x="19" y="297" fontSize="9.500" fontWeight="600" letterSpacing="-.6">Microsoft Bing</text>
            <text x="425" y="300.500" fontSize="9.500" letterSpacing="-.1" stroke="#000" strokeWidth="1.500" paintOrder="stroke" fontWeight="600">© 2025 Microsoft Corporation</text>
            <text x="566" y="300.500" fontSize="9.500" fontWeight="600" letterSpacing="-.3" textDecoration="underline" stroke="#1c3c9c" strokeWidth="1.500" paintOrder="stroke">Terms</text>
          </g>
        </svg>
      </MapLayer>
    </MapFrame>
  );
}

const air: { v: string; n: string; w: number; dx: number; dy: number; rx: number; col: string }[] = [
  { v: '27.75', n: 'PM10', w: 70, dx: 0, dy: 18, rx: 8.3, col: '#45dc49' }, { v: '99', n: 'O3', w: 38, dx: 0.5, dy: 18, rx: 8.3, col: '#fff36a' },
  { v: '14.99', n: 'SO2', w: 70, dx: 0, dy: 16, rx: 7.3, col: '#45dc49' }, { v: '25.53', n: 'PM2.5', w: 68, dx: 2, dy: 15.5, rx: 8.3, col: '#45dc49' },
  { v: '718', n: 'CO', w: 68, dx: 7, dy: 13, rx: 8, col: '#dc5042' }, { v: '10.73', n: 'NO2', w: 68, dx: 1, dy: 16, rx: 8.3, col: '#45dc49' },
];

const SUN = '#c98700';
function ReportPage() {
  return (
    <Canvas>
      <Backdrop>
        <LeftColumn>
          <Hero>
            <HeroTop>
              <Place>
                <Glyph w={25} h={29} shapes={[['M12.500 28C6 20 1 17 1 11.500a11.500 11 0 0 1 23 0C24 17 19 20 12.500 28z', W, 'none', 1.5], [c(12.5, 12.5, 4.8), W, 'none', 1.5]]} />
                <Heading>Jaipur</Heading>
              </Place>
              <Updated><Heading>Last Updated</Heading><Heading>28 Sep 25</Heading></Updated>
            </HeroTop>
            <HeroIcon>
              <Glyph w={64} h={58} shapes={[
                ['M10 42.500C0 41 -1 27 8 24.500 8 17 16 12 23 14 30-3 54 0 54.500 20.500 66 24 64 40 53.500 42.500z', '#d0d3d8', 'rgba(170,200,250,.7)', 3.6],
                ['M8 56.500h48', '#d0d3d8', 'none', 4]]} />
            </HeroIcon>
            <BigTemp>33.1 °C</BigTemp>
            <Condition>Mist</Condition>
            <Cities>
              <Glyph w={10} h={18} shapes={[['M9 .5L1 9l8 8.500', '#111', 'none', 1.3]]} />
              {[['Kohima', '28 °C'], ['Manipur', '32.3 °C'], ['Mumbai', '25.2 °C']].map(([n, t]) => (
                <City key={n}><CityName>{n}</CityName><CityTemp>{t}</CityTemp></City>
              ))}
              <Glyph w={10} h={18} shapes={[['M1 .5L9 9l-8 8.500', '#111', 'none', 1.3]]} />
            </Cities>
          </Hero>
          <Metrics>
            {metrics.map(m => (
              <MetricCard key={m.t}>
                <MetricIcon $x={m.ix} $y={m.iy}>{m.icon}</MetricIcon>
                <div>
                  <MetricTitle $x={m.tx} $y={m.ty}>{m.t}</MetricTitle>
                  <MetricValue $x={m.vx} $gap={m.gap} $light={m.light} $ls={m.ls}>{m.v}</MetricValue>
                </div>
              </MetricCard>
            ))}
          </Metrics>
        </LeftColumn>
        <RightColumn>
          <Days>
            {days.map(([t, d, k, up]) => (
              <Day key={d} $up={up}>
                <DayIcon $up={up}><DayGlyph kind={k} /></DayIcon>
                <DayTemp>{t}</DayTemp>
                <DayName>{d}</DayName>
              </Day>
            ))}
          </Days>
          <Panels>
            <ChartCard $r={27}><ChartTitle>Forecast Weather</ChartTitle><LineChart /></ChartCard>
            <Glass $r={24}>
              <SideTitle $top={12} $size={18.5} $ls={-.15}>Sunrice and Sunset</SideTitle>
              <SunRow $mt={9} $pad={5} $lh={29}>
                <Glyph w={66} h={54}>
                  <g stroke={SUN} strokeWidth="3.600" fill="none" strokeLinecap="round">
                    <path d="M15.500 36C11 25 18 14.500 33 14.500S55 25 50.500 36M2 42q9-3 15-5c7 0 10 4.500 16 4.500S42 37 49 37q6 2 15 5M13 52q6-3 10-2.500c4 0 6 2.500 10 2.500s6-2.500 10-2.500q4-.5 10 2.500" />
                    <path d="M33 2v4M17 6l2 3.500M49 6l-2 3.500M6 17l4 2.500M60 17l-4 2.500M2 33h4.500M60 33h4" />
                  </g>
                </Glyph>
                <SunText>Sunrise<br />06:18 AM</SunText>
              </SunRow>
              <SunRow $mt={41} $pad={12} $lh={31}>
                <Glyph w={66} h={44}>
                  <g stroke={SUN} strokeWidth="3" fill="none" strokeLinecap="round">
                    <path d="M20 31C15 21 21 11.500 33.500 11.500S52 21 47 31M5 41.500Q33 18 62 41.500" />
                    <path d="M33 2v5M21 5l2.500 4.500M45.500 5L43 9.500M12 14l5 3M54 14l-5 3M9 26h5M53 26h5" />
                  </g>
                </Glyph>
                <SunText>Sunset<br />06:10 PM</SunText>
              </SunRow>
            </Glass>
            <MapCard $r={27}><MapTitle>Mist</MapTitle><MapDrawing /></MapCard>
            <Glass $r={28}>
              <SideTitle $top={27} $size={17.5} $ls={-.25}>Air Quality Index</SideTitle>
              <AirGrid>
                {air.map(a => (
                  <AirCell key={a.n}>
                    <AirDot $x={a.dx} $y={a.dy} $rx={a.rx} $c={a.col} />
                    <AirText $w={a.w}><AirValue>{a.v}</AirValue><AirName>{a.n}</AirName></AirText>
                  </AirCell>
                ))}
              </AirGrid>
            </Glass>
          </Panels>
        </RightColumn>
      </Backdrop>
    </Canvas>
  );
}

/* ---------- page tabs ---------- */
const PageBar = styled.div`height: 35px; display: flex; align-items: flex-start; padding-left: 10px;`;
const ViewIcon = styled.div<{ $w: number; $on?: boolean }>`
  width: ${p => p.$w}px; height: 31px; display: flex; justify-content: center; padding-top: ${p => (p.$on ? 7 : 5)}px;
  border-bottom: ${p => (p.$on ? `3px solid ${GREEN}` : '0')};
`;
const PhoneIcon = styled(ViewIcon)`margin-left: 12px;`;
const Arrows = styled.div`display: flex; gap: 17px; padding: 14px 0 0 8px; width: 41px;`;
const PageTab = styled.div`
  width: 77px; height: 35px; background: #fff; border-left: 1px solid #a19f9d; border-right: 1px solid #c8c6c4; border-bottom: 4px solid ${GREEN};
  font-size: 12px; font-weight: 600; letter-spacing: -.4px; line-height: 37px; text-align: center; white-space: nowrap;
`;
const AddPage = styled.div`width: 39px; height: 35px; background: ${GREEN}; display: flex; align-items: center; justify-content: center; padding-bottom: 2px;`;

/* ---------- visualizations ---------- */
const axis: Shape = ['M.5 0v17.500h17.500'];
const bolt: Shape = ['M3 .5h5l-2.500 4h3L1.500 12l1.500-5H.5z', O, '#fcd679'];
const funnel: Shape = ['M9.500 9.500h9l-3.500 4v5.500h-2v-5.500z', K, '#fff', 1.1];
const T = (t: string, x: number, y: number, s: number, col = '#1f8ac9', w = 400) => (
  <text x={x} y={y} fontSize={s} fontWeight={w} fill={col} textAnchor="middle" letterSpacing="-.3">{t}</text>
);
const vis: { s: Shape[]; t?: React.ReactNode }[] = [
  { s: [[r(1, 3, 5, 4), K, '#fff'], [r(6, 3, 6, 4), D, B], [r(1, 11, 7, 4), K, '#fff'], [r(8, 11, 8, 4), '#8a8886', G], axis] },
  { s: [[r(3, 12, 4.5, 5.5), K, '#fff'], [r(3, 6, 4.5, 6), D, B], [r(11.5, 10, 4.5, 7.5), K, '#fff'], [r(11.5, 3, 4.5, 7), '#8a8886', G], axis] },
  { s: [[r(1, 1, 17, 4), D, B], [r(1, 5, 10, 4), '#8a8886', G], [r(1, 9.5, 8, 3), K, '#fff'], [r(1, 12.5, 11, 3.5), '#8a8886', G], axis] },
  { s: [[r(1, 1, 5, 16.5), D, B], [r(6, 7, 4, 10.5), K, '#fff'], [r(10, 10, 4, 7.5), '#8a8886', G], [r(14, 5, 3.5, 12.5), K, '#fff'], axis] },
  { s: [[r(1, 3, 14.5, 4), D, B], [r(1, 11, 9, 4), K, '#fff'], [r(10, 11, 5.5, 4), '#8a8886', G], axis] },
  { s: [[r(3, 2, 4.5, 11), D, B], [r(3, 13, 4.5, 4.5), K, '#fff'], [r(11.5, 2, 4.5, 6), '#8a8886', G], [r(11.5, 8, 4.5, 9.5), K, '#fff'], axis] },
  { s: [['M.5 13l6-7 4 4 4-6 3 3', '#2b88d8', 'none', 1.3], ['M.5 10l5-5 5 5 3-5 4 4', K, 'none', 1.2], axis] },
  { s: [['M9 8l4-7 5 16H8z', '#8a8886', G], ['M.5 12L6 2l8 14', K, '#fff'], ['M.5 17.500V13l3-2 3.500 3 5-7 5.500 10.500z', D, B]] },
  { s: [['M.5 1l4 5 4-4 5 5 4-4v8l-4 4-5-5-4 3-4-4z', 'none', B], ['M.5 2l4 4.500 4-4.500 5 5 4-4M.5 8l4 5 4-4 5 5 4-3', D], axis] },
  { s: [['M.5 2.500h17v8l-4 4-4-4-4 5-5-4z', 'none', B], ['M0 2.500h18M.5 9l5 5 4-4 4 4 4-4', D], axis] },
  { s: [[r(2.5, 6, 4.5, 11), '#8a8886', G], [r(3.5, 2, 4.5, 8), D, B], [r(11.5, 3, 4.5, 14), K, '#fff'], ['M.5 15l5-4 4 3 5-6 3 1', K, 'none', 1.2], axis] },
  { s: [[r(3, 9, 4, 8.5), D, B], [r(7, 2, 4.5, 15.5), K, '#fff'], [r(11.5, 6, 4.5, 11), '#8a8886', G], ['M.5 15l5-4 4 3 5-6 3 1', K, 'none', 1.2], axis] },
  { s: [['M1 4l5 3 5-4 6-1v5l-6 3-5 3-5-3z', '#6b6967', G], ['M1 9l5 3 4-4 7 4v4l-7 1-9 0z', '#b65c08', '#f0a34a'], ['M1 9c5 0 5 6 8 6s4-7 8-7v4c-4 0-5 5-8 5s-4-5-8-4z', D, B], axis] },
  { s: [[r(3, 5, 4, 12.5), K, '#fff'], [r(7, 5, 3, 4), K, '#fff'], [r(10, 1.5, 3, 9), D, B], [r(13, 1.5, 4, 16), K, '#fff'], axis] },
  { s: [[r(0.5, 1.5, 17, 4.5), D, B], [r(3, 6, 12, 5), D, B], [r(6, 11, 6, 5.5), D, B]] },
  { s: [[r(3, 4, 3, 3), 'none', B], [r(13, 1, 3, 3), 'none', K], [r(8, 7.5, 3, 3), 'none', B], [r(3, 12, 3, 3), 'none', K], [r(13, 11, 3, 3), 'none', B], axis] },
  { s: [[c(9, 9, 8.3), K, '#fff'], ['M9 9V.7a8.300 8.300 0 0 1 5.500 14.500z', D, B]] },
  { s: [['M9 .7a8.300 8.300 0 1 1-8.300 8.300h4.500a3.800 3.800 0 1 0 3.800-3.800z', D, B], ['M.7 9A8.300 8.300 0 0 1 9 .7v4.500A3.800 3.800 0 0 0 5.200 9z', K, '#fff']] },
  { s: [[r(0.5, 0.5, 8, 17), D, B], [r(8.5, 0.5, 9, 7), D, '#fff'], [r(8.5, 7.5, 5, 10), K, '#fff'], [r(13.5, 7.5, 4, 10), K, '#fff'], ['M.5 10h8', D]] },
  { s: [[c(9.5, 7.5, 5.5), K, '#fff'], ['M7 4l4 1-1 3-3 2zM11 8l3 0-2 4z', '#1c8c4c', '#1c8c4c'], ['M5 1a8 8 0 0 0 8 13M9.500 14.500V17M4 17.500h11', K, 'none', 1.2]] },
  { s: [['M1 1l5 2 5-1 6 0v7l-3 5-5 2-4-5-4-3z', '#6b6967', G], ['M1 1l6 3v5l-4 1-2-3z', D, B], ['M10 9l7-1-3 7-4 1z', D, B]] },
  { s: [['M11 0l6 18-6-4.500z', 'none', '#1c6fae'], ['M11 0v13.500L0 17z', 'none', '#3fa4e4']] },
  { s: [['M0 13.500a9 9 0 0 1 18 0h-4.500a4.500 4.500 0 0 0-9 0z', K, '#fff'], ['M4 6a9 9 0 0 1 14 7.500h-4.500a4.500 4.500 0 0 0-6-4z', D, B], ['M6 7l4 6', K, 'none', 1.6]] },
  { s: [[r(0.5, 2.5, 17, 13), K, '#fff']], t: T('123', 9, 12.5, 9.5) },
  { s: [[r(0.5, 0.5, 17, 17), K, '#fff', 1.2], ['M3.500 3v12', K], ['M5 5h10M5 11.500h10', D, 'none', 2], ['M5 8h6M5 14h5', '#8a8886']] },
  { s: [[r(0.5, 2, 17, 14), K, '#fff'], ['M3 10l2.500-5L8 10z', '#2c9a56', '#8ed3a6'], ['M10 5h5l-2.500 5z', '#c8352c', '#f0564c'], ['M3 13h12', '#8a8886']] },
  { s: [[r(0.5, 0.5, 17, 16), K, '#fff'], [r(0.5, 0.5, 17, 3), '#6b6967', G], [r(3.5, 6.5, 3, 3), '#8a8886'], [r(3.5, 12, 3, 3), '#8a8886'], funnel] },
  { s: [[r(0.5, 0.5, 17, 17), K, '#fff'], [r(0.5, 0.5, 17, 3), K, G], ['M6 3.500v14M12 3.500v14M.5 8.500h17M.5 13h17', '#8a8886']] },
  { s: [[r(0.5, 0.5, 17, 17), K, '#fff'], [r(0.5, 0.5, 17, 3), K, G], [r(12, 3.5, 5.5, 14), 'none', B], [r(1, 13, 16, 4.5), 'none', B], ['M6 3.500v14M12 3.500v14M.5 8.500h17M.5 13h17', D]] },
  { s: [], t: T('R', 8, 15, 15, '#1f8ac9', 700) },
  { s: [], t: T('Py', 9, 14, 14.5, '#1f8ac9', 700) },
  { s: [axis, ['M1 3.500h11M1 8.500h9M1 13.500h5', '#6b6967'], [c(14.5, 3.5, 2), D, B], [c(10.5, 8.5, 1.6), '#6b6967', G], [c(6.5, 13.5, 1.6), '#6b6967', G]] },
  { s: [[r(0, 7, 6, 4), D, B], [r(11.5, 1, 6, 4), D, B], [r(11.5, 7, 6, 4), D, B], [r(11.5, 13, 6, 4), D, B], ['M6 9h5.500M9 3v12M9 3h2.500M9 15h2.500', K]] },
  { s: [['M.5 2h17v11H9l-4.500 4v-4h-4z', D, '#fff', 1.2]] },
  { s: [['M4 5V.5h7l4 4v13H4v-5M11 .5v4.500h4', K, '#fff'], [r(1, 5.5, 4, 4), D, B], ['M7 9h5M7 12.500h6', '#2b88d8']] },
  { s: [['M4 .8h10v6a5 5 0 0 1-10 0zM4 3H.5c0 4 1.500 6 4 6M14 3h3.500c0 4-1.500 6-4 6M9 11.500V15', K, '#fff', 1.2], [r(4, 0.8, 10, 2.5), D, B], [r(5, 14.5, 8, 3), D, B]] },
  { s: [['M1.500.5h9l5 5v12.500h-14zM10.500.5v5h5', K, '#fff', 1.4], ['M5 15v-4M8 15v-2M11.500 15v-6', K, 'none', 2]] },
  { s: [[r(2, 4, 15.5, 12), K, '#fff'], bolt], t: T('123', 11, 13.5, 9) },
  { s: [[r(1, 10, 6, 7), '#8a8886', '#fff'], [r(10, 1, 7, 7), '#8a8886', '#fff'], bolt, [r(6, 5, 2, 2), D, B], funnel] },
  { s: [['M8 1.500h9.500v9M1 11v6h10', K], ['M7 12l4-8 3 6', '#2b88d8'], bolt, funnel] },
  { s: [['M8 1.500h9.500v3M1 11v6h10M9 6h7M4 13h3', K], bolt, funnel] },
  { s: [[r(6, 1, 12, 5), '#2b88d8', '#fff'], ['M13 3c4 3-1 5-3 6s-3 3-4 4H1v5h10c1-4 3-5 5-6s3-5 1-9z', D, B], ['M0 1h6v5l-3 5-3-5z', 'none', O], [c(3, 4, 1.2), 'none', '#fff'], [c(15.5, 16, 2.2), O, O], [r(16, 10, 2.5, 2.5), 'none', O]] },
  { s: [['M5.500 .5h7L17.500 9l-5 8.500h-7L.5 9zM4 3.500l10 11M14 3.500l-10 11M9 9l4-4 3.500 4-3.500 4z', '#8d3c9c', 'none', 1.2]] },
  { s: [['M.5 2h11l6 7-6 7H.5l6-7zM4 6L11 2M6 9l8-4M3 14L15 8M7 16l9-6', '#1b86d6', 'none', 1.3]] },
  { s: [['M3 8.500h1.500M8.500 8.500h1.500M14 8.500h1.500', K, 'none', 1.5]] },
];

const VisPane = styled.aside`width: 181px; flex: none; border-left: 1px solid #d2d0ce; display: flex; flex-direction: column;`;
const PaneTitle = styled.div`
  height: 38px; display: flex; align-items: center; justify-content: space-between; padding: 0 8px 0 8px;
  font-size: 15.500px; font-weight: 600; letter-spacing: -.3px;
`;
const Build = styled.div`font-size: 12px; font-weight: 600; letter-spacing: -.25px; line-height: 16px; padding: 0 0 3px 8px;`;
const Modes = styled.div`display: flex; padding-left: 8px; height: 32px; gap: 37px; align-items: center;`;
const ModeOn = styled.div`width: 32px; height: 32px; border-radius: 2px; background: #c8c6c4; display: flex; align-items: center; justify-content: center;`;
const VisGrid = styled.div`display: grid; grid-template-columns: repeat(6, 28px); grid-auto-rows: 28px; padding: 11px 0 0 11px; height: 235px; border-bottom: 1px solid #e1dfdd;`;
const Fields = styled.div`font-size: 12px; letter-spacing: -.15px; padding-left: 12px; display: flex; flex-direction: column;`;
const FieldLabel = styled.div<{ $mt: number; $strong?: boolean }>`
  margin-top: ${p => p.$mt}px; line-height: 18px; font-weight: ${p => (p.$strong ? 600 : 400)}; color: ${p => (p.$strong ? '#484644' : '#252423')};
  display: flex; justify-content: space-between; align-items: center; width: 146px;
`;
const Drop = styled.div<{ $mt: number; $h: number; $pad: number }>`
  margin: ${p => p.$mt}px 0 0 -8px; width: 170px; height: ${p => p.$h}px; background: #fff; border: 1px dashed #c3c1bf; border-radius: 2px;
  line-height: ${p => p.$h - 2}px; padding-left: ${p => p.$pad}px; white-space: nowrap; letter-spacing: -.2px;
`;
const Toggle = styled.div<{ $on?: boolean }>`
  width: 32px; height: 16px; border-radius: 8px; font-size: 9.500px; line-height: 1; display: flex; align-items: center; gap: 2px; letter-spacing: -.3px;
  padding: 0 4px; flex-direction: ${p => (p.$on ? 'row-reverse' : 'row')}; background: ${p => (p.$on ? GREEN : '#fff')}; color: ${p => (p.$on ? '#fff' : '#605e5c')};
  border: 1px solid ${p => (p.$on ? GREEN : '#605e5c')}; font-weight: ${p => (p.$on ? 600 : 400)};
  &::before { content: ''; width: 8px; height: 8px; flex: none; border-radius: 50%; background: ${p => (p.$on ? '#fff' : '#605e5c')}; }
`;
const DataPane = styled.aside`width: 181px; flex: none; border-left: 1px solid #d2d0ce;`;
const Search = styled.div`
  margin: 7px 0 9px 4px; width: 172px; height: 24px; background: #fff; border: 1px solid #d1cfcd; border-bottom-color: #605e5c; border-radius: 4px;
  display: flex; align-items: center; gap: 6px; padding-left: 12px; font-size: 13.500px; color: #605e5c; letter-spacing: -.3px;
`;
const Leaf = styled.div`height: 24px; display: flex; align-items: center; padding-left: 15px; font-size: 12.300px; letter-spacing: -.35px; svg + svg { margin: 0 5px 0 7px; }`;

const Chevrons = ({ left }: { left?: boolean }) => (
  <Glyph w={13} h={13} shapes={[[left ? 'M6.500 .5l-6 6 6 6M12.500 .5l-6 6 6 6' : 'M.5 .5l6 6-6 6M6.500 .5l6 6-6 6', K, 'none', 1.2]]} />
);

/* ---------- status bar ---------- */
const Status = styled.footer`
  height: 23px; flex: none; border-top: 1px solid #d8d6d4; display: flex; align-items: center; padding: 2px 18px 0 4px;
  font-size: 12px; letter-spacing: -.1px; color: #484644; background: #f3f2f1;
`;
const ZoomTools = styled.div`margin-left: auto; display: flex; align-items: center; gap: 6px; color: #605e5c; margin-top: -2px;`;
const ZoomValue = styled.div`margin: 1px 6px 0 12px; letter-spacing: -.2px;`;
const Watermark = styled.div`
  position: absolute; left: 1599px; top: 903px; z-index: 5; color: #b9b8b7; pointer-events: none; white-space: nowrap;
  font-size: 14.500px; line-height: 21px; letter-spacing: 0;
  strong { display: block; font-weight: 400; font-size: 19.500px; line-height: 26px; letter-spacing: -.2px; }
`;

export default function App() {
  return (
    <Shell>
      <Global />
      <RibbonBar />
      <Body>
        <Rail>
          <RailItem $on><Glyph w={15} h={15} shapes={[['M.7 0v14.300H15', '#111', 'none', 1.4], [r(3, 4, 2, 8), '#111'], [r(7, 6, 2, 6), '#111'], [r(11, 2, 2, 10), '#111']]} /></RailItem>
          <RailItem><Glyph w={16} h={15} shapes={[[r(0.5, 0.5, 15, 14), '#605e5c'], ['M.5 3.500h15M.5 7h15M.5 11h15M5.500 3.500v11M10.500 3.500v11', '#605e5c']]} /></RailItem>
          <RailItem><Glyph w={18} h={18} shapes={[[r(0.5, 5.5, 7, 7.5), '#605e5c'], [r(10.5, 0.5, 7, 7), '#605e5c'], [r(10.5, 10.5, 7, 7), '#605e5c'], ['M.5 8h7M10.500 3.500h7M10.500 13.500h7M4 5.500V3h6.500M4 13v2.500h6.500', '#605e5c']]} /></RailItem>
          <RailItem><Glyph w={18} h={18} shapes={[['M5 10V.5h5.500l3.500 4V14M10 .5V5h4M16.500 6v6q0 2-2 4', '#605e5c']]}><text x="0" y="16.500" fontSize="7" fontWeight="600" fill="#605e5c">DAX</text></Glyph></RailItem>
          <RailItem><Glyph w={18} h={18} shapes={[['M4 9V.5h6.500l4 4V9M10 .5V5h4.500', '#605e5c']]}><text x="9" y="16.500" fontSize="6.800" fontWeight="600" fill="#605e5c" textAnchor="middle">TMDL</text></Glyph></RailItem>
        </Rail>
        <Center>
          <Stage>
            <ReportPage />
            <FiltersPane>
              <Chevrons left />
              <Glyph w={13} h={13} shapes={[['M12.300 .8v11.400L7.500 8.500H1.500v-4h6z', K, 'none', 1.4]]} />
              <span>Filters</span>
            </FiltersPane>
          </Stage>
          <PageBar>
            <ViewIcon $w={24} $on><Glyph w={20} h={14} shapes={[[r(0.7, 0.7, 18, 10), '#484644', 'none', 1.4], ['M9.500 11v2.500M6 13.500h7', '#484644', 'none', 1.3]]} /></ViewIcon>
            <PhoneIcon $w={40}><Glyph w={14} h={20} shapes={[[r(0.7, 0.7, 12.5, 18.5), '#605e5c', 'none', 1.4], ['M5.500 17h3', '#605e5c', 'none', 1.2]]} /></PhoneIcon>
            <Arrows>
              <Glyph w={5} h={8} shapes={[['M4.500 0v8L0 4z', 'none', '#c0bebc']]} />
              <Glyph w={5} h={8} shapes={[['M0 0v8l4.500-4z', 'none', '#c0bebc']]} />
            </Arrows>
            <PageTab>Page 1</PageTab>
            <AddPage><Glyph w={11} h={11} shapes={[['M5.500 0v11M0 5.500h11', '#fff', 'none', 3]]} /></AddPage>
          </PageBar>
        </Center>
        <VisPane>
          <PaneTitle>Visualizations<Chevrons /></PaneTitle>
          <Build>Build visual</Build>
          <Modes>
            <ModeOn>
              <Glyph w={24} h={25} shapes={[['M0 1.500h19', '#252423', 'none', 1.4], [r(0.5, 6, 23, 7), 'none', GREEN], [r(0.5, 17, 23, 7), 'none', GREEN]]}>
                <path d="M.5 6h23v7H.5zM.5 17h23v7H.5z" fill="none" stroke="#111" strokeDasharray="2 1" />
              </Glyph>
            </ModeOn>
            <Glyph w={25} h={25} shapes={[['M7 24H1V1h10l6 6v4M11 1v6h6', K, 'none', 1.2], ['M24 8.500L14 16.500l2.500 2.500z', K, '#fff', 1.1], ['M13.500 17c-4 0-2 5-6 6.500 4 1 8 0 8.500-4z', K, '#fff', 1.1]]} />
          </Modes>
          <Glyph w={180} h={13} shapes={[['M0 12.500h16l8-7 8 7h148', '#8a8886', 'none', 1]]} />
          <VisGrid>
            {vis.map((v, i) => <Glyph key={i} w={18} h={18} shapes={v.s}>{v.t}</Glyph>)}
          </VisGrid>
          <Fields>
            <FieldLabel $mt={8}>Values</FieldLabel>
            <Drop $mt={5} $h={28} $pad={10}>Add data fields here</Drop>
            <FieldLabel $mt={9} $strong>Drill through</FieldLabel>
            <FieldLabel $mt={7}>Cross-report<Toggle>Off</Toggle></FieldLabel>
            <FieldLabel $mt={9}>Keep all filters<Toggle $on>On</Toggle></FieldLabel>
            <Drop $mt={9} $h={26} $pad={8}>Add drill-through fields here</Drop>
          </Fields>
        </VisPane>
        <DataPane>
          <PaneTitle>Data<Chevrons /></PaneTitle>
          <Search><Glyph w={15} h={15} shapes={[[c(6, 6, 5.3), '#605e5c'], ['M10 10l4.500 4.500', '#605e5c']]} />Search</Search>
          {['_Measure', 'Current', 'Forecast_Day', 'Forecast_Hour', 'Location', 'Master_Table'].map(n => (
            <Leaf key={n}>
              <Glyph w={7} h={12} shapes={[['M.5 .5L6.500 6l-6 5.500', '#605e5c']]} />
              {n === '_Measure' || n === 'Location'
                ? <Glyph w={13} h={13} shapes={[['M6 12H2.500q-2 0-2-2V2.500q0-2 2-2h8q2 0 2 2v2M.5 4h12M4 .5V12M8.500 .5V5M.5 8h5', '#252423', 'none', 1.1], [r(7, 5.5, 6, 8), '#252423', '#f3f2f1', 1.2], ['M7 8h6M9 10.500h3M9 12h3', '#252423']]} />
                : <Glyph w={13} h={13} shapes={[['M2.500 .5h8q2 0 2 2v8q0 2-2 2h-8q-2 0-2-2v-8q0-2 2-2zM.5 4.500h12M.5 8.500h12M4.500 .5v12M8.500 .5v12', '#252423', 'none', 1.1]]} />}
              {n}
            </Leaf>
          ))}
        </DataPane>
      </Body>
      <Status>
        Page 1 of 1
        <ZoomTools>
          <Glyph w={119} h={12} shapes={[['M0 6h5', '#605e5c', 'none', 1.5], ['M9 6h100', '#605e5c', 'none', 1], [r(60, 1, 4, 10), 'none', '#605e5c'], ['M115 6h8M119 2v8', '#605e5c', 'none', 1.3]]} />
          <ZoomValue>113%</ZoomValue>
          <Glyph w={16} h={12} shapes={[[r(0.7, 0.7, 14.6, 10.6), '#605e5c', 'none', 1.2], ['M3 5V3h3M10 3h3v2M3 7v2h3M13 7v2h-3', '#605e5c']]} />
        </ZoomTools>
      </Status>
      <Watermark><strong>Activate Windows</strong>Go to Settings to activate Windows.</Watermark>
    </Shell>
  );
}
